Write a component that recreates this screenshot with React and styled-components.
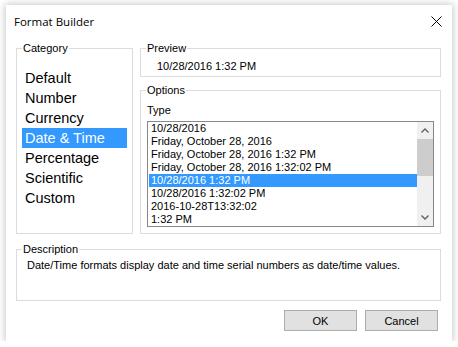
import React from 'react'
import styled, { createGlobalStyle } from 'styled-components'

const GlobalStyle = createGlobalStyle`
    html, body {
        margin: 0;
        padding: 0;
        background: #ffffff;
    }
    body {
        font-family: 'Liberation Sans', Arial, sans-serif;
        font-size: 11px;
        color: #000;
    }
`

const categories = ['Default', 'Number', 'Currency', 'Date & Time', 'Percentage', 'Scientific', 'Custom']

const types = [
    '10/28/2016',
    'Friday, October 28, 2016',
    'Friday, October 28, 2016 1:32 PM',
    'Friday, October 28, 2016 1:32:02 PM',
    '10/28/2016 1:32 PM',
    '10/28/2016 1:32:02 PM',
    '2016-10-28T13:32:02',
    '1:32 PM',
]

const Window = styled.div`
    margin: 5px 0 0 6px;
    width: 446px;
    height: 336px;
    background: #fff;
    box-shadow: 0 0 7px 1px rgba(0, 0, 0, 0.22);
    display: flex;
    flex-direction: column;
    box-sizing: border-box;
`

const TitleBar = styled.div`
    height: 33px;
    display: flex;
    align-items: center;
    justify-content: space-between;
    padding: 0 10px 0 8px;
`

const Title = styled.span`
    font-family: 'Segoe UI', 'Open Sans', sans-serif;
    font-size: 11.5px;
`

const Body = styled.div`
    padding: 4px 11px 0 10px;
    display: flex;
    flex-direction: column;
`

const TopRow = styled.div`
    display: flex;
    gap: 7px;
    height: 192px;
`

const RightColumn = styled.div`
    display: flex;
    flex-direction: column;
    gap: 7px;
    width: 301px;
`

const GroupBox = styled.fieldset`
    margin: ${p => p.$margin || '0'};
    border: 1px solid #dcdcdc;
    padding: 0;
    box-sizing: border-box;
    width: ${p => p.$width || 'auto'};
    height: ${p => p.$height};
    min-width: 0;

    legend {
        margin-left: 5px;
        padding: 0 1px;
        line-height: 13px;
        font-size: 11px;
    }
`

const GroupContent = styled.div`
    padding: ${p => p.$pad};
`

const CategoryList = styled.div`
    display: flex;
    flex-direction: column;
`

const CategoryItem = styled.div`
    height: 20px;
    line-height: 20px;
    padding-left: 3px;
    font-size: 14.5px;
    background: ${p => (p.$selected ? '#3399ff' : 'transparent')};
    color: ${p => (p.$selected ? '#fff' : '#000')};
`

const Line = styled.div`
    line-height: 13px;
    white-space: nowrap;
`

const ListBox = styled.div`
    margin-top: 4px;
    width: 287px;
    height: 106px;
    border: 1px solid #828790;
    box-sizing: border-box;
    display: flex;
    background: #fff;
`

const Items = styled.div`
    flex: 1;
    padding-left: 1px;
    overflow: hidden;
`

const TypeItem = styled.div`
    height: 13px;
    line-height: 13px;
    padding-left: 2px;
    white-space: nowrap;
    background: ${p => (p.$selected ? '#3399ff' : 'transparent')};
    color: ${p => (p.$selected ? '#fff' : '#000')};
`

const ScrollBar = styled.div`
    width: 16px;
    background: #f0f0f0;
    display: flex;
    flex-direction: column;
`

const ScrollButton = styled.div`
    height: 17px;
    display: flex;
    align-items: center;
    justify-content: center;
`

const ScrollTrack = styled.div`
    flex: 1;
    display: flex;
    flex-direction: column;
`

const ScrollThumb = styled.div`
    height: 37px;
    background: #cdcdcd;
`

const ButtonRow = styled.div`
    display: flex;
    justify-content: flex-end;
    gap: 8px;
    padding-right: 3px;
    margin-top: 9px;
`

const Button = styled.button`
    width: 73px;
    height: 21px;
    background: #e1e1e1;
    border: 1px solid #adadad;
    font-family: 'Liberation Sans', Arial, sans-serif;
    font-size: 11px;
    color: #000;
    padding: 0;
`

const Chevron = ({ up }) => (
    <svg width="8" height="5" viewBox="0 0 8 5">
        <polyline
            points={up ? '0.5,4.5 4,1 7.5,4.5' : '0.5,0.5 4,4 7.5,0.5'}
            fill="none"
            stroke="#606060"
            strokeWidth="1.4"
        />
    </svg>
)

const CloseIcon = () => (
    <svg width="11" height="11" viewBox="0 0 11 11">
        <path d="M0.5 0.5 L10.5 10.5 M10.5 0.5 L0.5 10.5" stroke="#000" strokeWidth="1" />
    </svg>
)

const App = () => (
    <>
        <GlobalStyle />
        <Window>
            <TitleBar>
                <Title>Format Builder</Title>
                <CloseIcon />
            </TitleBar>
            <Body>
                <TopRow>
                    <GroupBox $width="117px" $height="192px">
                        <legend>Category</legend>
                        <GroupContent $pad="13px 5px 0 5px">
                            <CategoryList>
                                {categories.map(c => (
                                    <CategoryItem key={c} $selected={c === 'Date & Time'}>{c}</CategoryItem>
                                ))}
                            </CategoryList>
                        </GroupContent>
                    </GroupBox>
                    <RightColumn>
                        <GroupBox $height="35px">
                            <legend>Preview</legend>
                            <GroupContent $pad="5px 0 0 16px">
                                <Line>10/28/2016 1:32 PM</Line>
                            </GroupContent>
                        </GroupBox>
                        <GroupBox $height="150px">
                            <legend>Options</legend>
                            <GroupContent $pad="7px 0 0 6px">
                                <Line>Type</Line>
                                <ListBox>
                                    <Items>
                                        {types.map((t, i) => (
                                            <TypeItem key={t} $selected={i === 4}>{t}</TypeItem>
                                        ))}
                                    </Items>
                                    <ScrollBar>
                                        <ScrollButton><Chevron up /></ScrollButton>
                                        <ScrollTrack>
                                            <ScrollThumb />
                                        </ScrollTrack>
                                        <ScrollButton><Chevron /></ScrollButton>
                                    </ScrollBar>
                                </ListBox>
                            </GroupContent>
                        </GroupBox>
                    </RightColumn>
                </TopRow>
                <GroupBox $height="58px" $margin="9px 0 0 0">
                    <legend>Description</legend>
                    <GroupContent $pad="3px 0 0 10px">
                        <Line>Date/Time formats display date and time serial numbers as date/time values.</Line>
                    </GroupContent>
                </GroupBox>
                <ButtonRow>
                    <Button>OK</Button>
                    <Button>Cancel</Button>
                </ButtonRow>
            </Body>
        </Window>
    </>
)

export default App
